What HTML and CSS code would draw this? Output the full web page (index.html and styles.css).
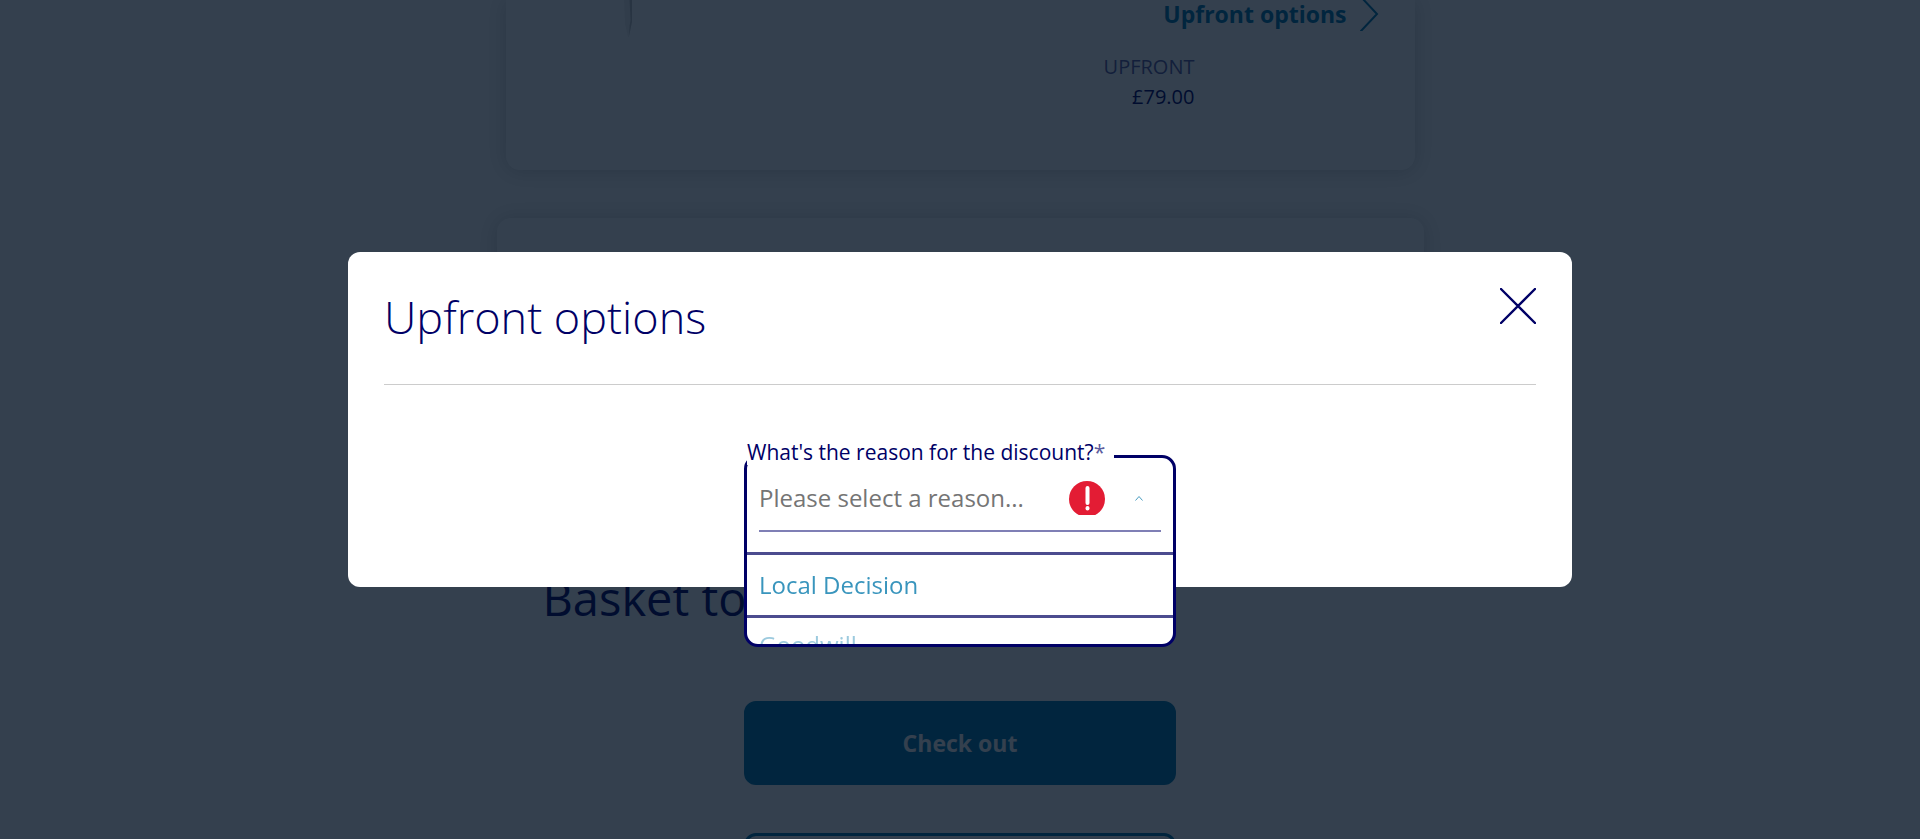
FILE: index.html
```html
<!DOCTYPE html>
<html lang="en">
<head>
<meta charset="utf-8">
<title>Upfront options</title>
<link rel="stylesheet" href="styles.css">
</head>
<body>
<main class="page">
  <section class="card device-card">
    <svg class="device-edge" width="9" height="37" viewBox="0 0 9 37" aria-hidden="true">
      <path class="edge-light" d="M0 0H8V22L5 37H4L1 24Z"/>
      <path class="edge-dark" d="M5.500 0H8V22L5 36L5.500 26L6.500 20Z"/>
    </svg>
    <div class="device-side">
      <a class="options-link" href="#options">Upfront options
        <svg width="20" height="34" viewBox="0 0 20 34" aria-hidden="true"><path d="M2 0 18 17 2 34"/></svg>
      </a>
      <dl class="price">
        <dt>UPFRONT</dt>
        <dd>£79.00</dd>
      </dl>
    </div>
  </section>
  <section class="card basket-card" aria-label="Basket items"></section>
  <section class="summary">
    <h2 class="summary-title">Basket total</h2>
    <div class="summary-actions">
      <button class="button button-primary" type="button">Check out</button>
      <button class="button button-outline" type="button" aria-label="More basket actions"></button>
    </div>
  </section>
</main>

<div class="overlay">
  <div class="modal" role="dialog" aria-modal="true" aria-labelledby="modal-title">
    <header class="modal-header">
      <h1 class="modal-title" id="modal-title">Upfront options</h1>
      <button class="close" type="button" aria-label="Close">
        <svg width="36" height="36" viewBox="0 0 36 36" aria-hidden="true"><path d="M1 1 35 35M35 1 1 35"/></svg>
      </button>
    </header>
    <div class="field">
      <div class="combo">
        <label class="combo-label" for="reason">What's the reason for the discount?<span class="required">*</span></label>
        <div class="combo-row">
          <input class="combo-input" id="reason" type="text" role="combobox" aria-expanded="true" aria-controls="reasons" placeholder="Please select a reason...">
          <svg class="error-icon" width="36" height="34" viewBox="0 0 36 34" aria-hidden="true">
            <circle cx="18" cy="18" r="18"/>
            <path d="M18.500 7V22M18.500 27V27.500"/>
          </svg>
          <svg class="caret" width="8" height="5" viewBox="0 0 8 5" aria-hidden="true"><path d="M.500 4.500 4 .500 7.500 4.500"/></svg>
        </div>
        <ul class="options" id="reasons" role="listbox">
          <li class="option" role="option">Local Decision</li>
          <li class="option option-fading" role="option">Goodwill</li>
        </ul>
      </div>
    </div>
  </div>
</div>
</body>
</html>
```
FILE: styles.css
```css
* {
  box-sizing: border-box;
}

body {
  margin: 0;
  height: 100vh;
  overflow: hidden;
  background: #fdfdfd;
  color: #000066;
  font-family: "Open Sans", "Noto Sans", sans-serif;
}

.page {
  display: flex;
  flex-direction: column;
  align-items: center;
  height: 100%;
  overflow: hidden;
  padding: 0 24px;
}

.card {
  flex: none;
  width: 100%;
  background: #fff;
  border-radius: 14px;
  box-shadow: 0 1px 20px rgba(0, 0, 0, 0.18);
}

.device-card {
  display: flex;
  justify-content: space-between;
  align-items: flex-start;
  max-width: 909px;
  padding: 0 36px 58px 118px;
  border-top-left-radius: 0;
  border-top-right-radius: 0;
}

.device-edge {
  display: block;
}

.edge-light {
  fill: #f0f0f0;
}

.edge-dark {
  fill: #c4c4c4;
}

.device-side {
  display: flex;
  flex-direction: column;
  align-items: flex-end;
  gap: 24px;
}

.options-link {
  display: flex;
  align-items: center;
  gap: 12px;
  height: 28px;
  color: #0079ad;
  font-size: 23px;
  font-weight: 700;
  line-height: 28px;
  text-decoration: none;
}

.options-link svg {
  fill: none;
  stroke: currentColor;
  stroke-width: 2;
  stroke-linecap: round;
}

.price {
  margin: 0;
  padding-right: 184px;
  font-size: 20px;
  line-height: 30px;
  text-align: right;
}

.price dt {
  color: #5c5c9e;
}

.price dd {
  margin: 0;
}

.basket-card {
  max-width: 927px;
  min-height: 300px;
  margin-top: 48px;
}

.summary {
  flex: none;
  width: 100%;
  max-width: 927px;
  padding: 48px 46px 0;
}

.summary-title {
  margin: 0;
  font-size: 47px;
  font-weight: 400;
  line-height: 64px;
}

.summary-actions {
  display: flex;
  flex-direction: column;
  align-items: center;
  gap: 48px;
  padding-top: 71px;
}

.button {
  width: 100%;
  max-width: 432px;
  height: 84px;
  border: 3px solid #0079ad;
  border-radius: 12px;
  font: 700 23px/32px "Open Sans", "Noto Sans", sans-serif;
}

.button-primary {
  background: #0079ad;
  color: #fff;
}

.button-outline {
  background: #fff;
  color: #0079ad;
}

.overlay {
  position: fixed;
  inset: 0;
  display: flex;
  align-items: center;
  justify-content: center;
  padding: 0 24px;
  background: rgba(1, 16, 34, 0.8);
}

.modal {
  width: 100%;
  max-width: 1224px;
  padding: 36px;
  border-radius: 12px;
  background: #fff;
}

.modal-header {
  display: flex;
  justify-content: space-between;
  align-items: flex-start;
  padding-bottom: 38px;
  border-bottom: 1px solid #ccc;
}

.modal-title {
  margin: 0;
  font-size: 45px;
  font-weight: 300;
  line-height: 58px;
}

.close {
  padding: 0;
  border: 0;
  background: none;
  color: #000066;
}

.close svg {
  display: block;
  fill: none;
  stroke: currentColor;
  stroke-width: 2.4;
  stroke-linecap: round;
}

.field {
  position: relative;
  height: 166px;
}

.combo {
  position: absolute;
  top: 70px;
  left: 0;
  right: 0;
  max-width: 432px;
  height: 192px;
  margin: 0 auto;
  border: 3px solid #000066;
  border-radius: 14px;
  background: #fff;
}

.combo-label {
  position: absolute;
  top: -19px;
  left: 0;
  padding-right: 9px;
  background: #fff;
  font-size: 21px;
  line-height: 26px;
  white-space: nowrap;
}

.required {
  color: #5c5c9e;
}

.combo-row {
  display: flex;
  align-items: center;
  margin: 10px 12px 0;
  padding: 0 18px 2px 0;
  height: 64px;
  border-bottom: 2px solid #7f7fb5;
}

.combo-input {
  flex: 1;
  min-width: 0;
  padding: 0;
  border: 0;
  outline: 0;
  background: none;
  color: #000066;
  font: 400 24px/32px "Open Sans", "Noto Sans", sans-serif;
}

.combo-input::placeholder {
  color: #757575;
  opacity: 1;
}

.error-icon {
  fill: #e31c34;
}

.error-icon path {
  fill: none;
  stroke: #fff;
  stroke-width: 4;
  stroke-linecap: round;
}

.caret {
  margin-left: 30px;
  fill: none;
  stroke: #4a9cc0;
  stroke-width: 1;
}

.options {
  height: 92px;
  margin: 20px 0 0;
  padding: 0;
  overflow: hidden;
  border-bottom-left-radius: 11px;
  border-bottom-right-radius: 11px;
  list-style: none;
}

.option {
  height: 63px;
  padding: 0 12px;
  border-top: 3px solid #4c4c8f;
  color: #3995bd;
  font-size: 24px;
  line-height: 60px;
}

.option-fading {
  color: #9ccade;
  line-height: 54px;
}
```
